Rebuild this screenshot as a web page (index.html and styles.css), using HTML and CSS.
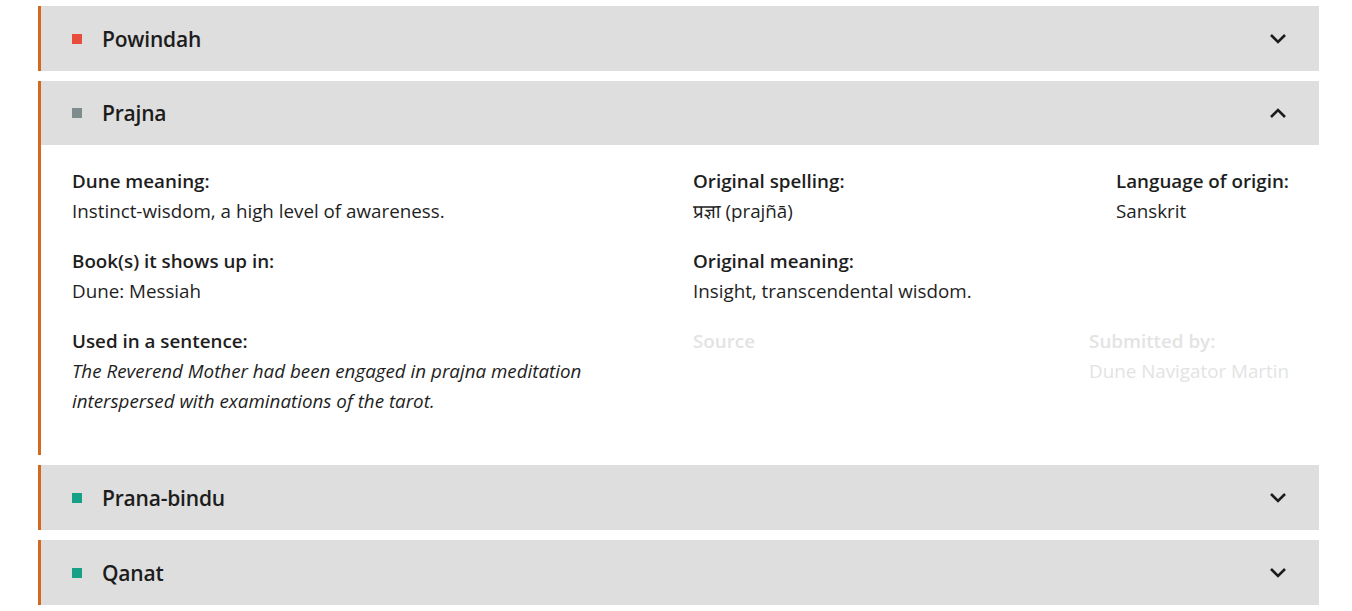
FILE: index.html
```html
<!DOCTYPE html>
<html lang="en">
<head>
<meta charset="utf-8">
<title>Dune glossary</title>
<link rel="stylesheet" href="styles.css">
</head>
<body>
<div class="list">
  <section class="card">
    <header class="card-head">
      <span class="dot dot-red"></span>
      <h2 class="card-title">Powindah</h2>
      <svg class="chev" viewBox="0 0 18 12" width="18" height="12"><path d="M2 2 L9 9 L16 2" fill="none" stroke="#1c1c1c" stroke-width="2.6"/></svg>
    </header>
  </section>
  <section class="card open">
    <header class="card-head">
      <span class="dot dot-gray"></span>
      <h2 class="card-title">Prajna</h2>
      <svg class="chev" viewBox="0 0 18 12" width="18" height="12"><path d="M2 10 L9 3 L16 10" fill="none" stroke="#1c1c1c" stroke-width="2.6"/></svg>
    </header>
    <div class="card-body">
      <div class="field">
        <div class="label">Dune meaning:</div>
        <div class="value">Instinct-wisdom, a high level of awareness.</div>
      </div>
      <div class="field">
        <div class="label">Original spelling:</div>
        <div class="value"><span class="deva">प्रज्ञा</span> (prajñā)</div>
      </div>
      <div class="field right">
        <div class="label">Language of origin:</div>
        <div class="value">Sanskrit</div>
      </div>
      <div class="field">
        <div class="label">Book(s) it shows up in:</div>
        <div class="value">Dune: Messiah</div>
      </div>
      <div class="field">
        <div class="label">Original meaning:</div>
        <div class="value">Insight, transcendental wisdom.</div>
      </div>
      <div class="field right"></div>
      <div class="field">
        <div class="label">Used in a sentence:</div>
        <div class="value sentence">The Reverend Mother had been engaged in prajna meditation interspersed with examinations of the tarot.</div>
      </div>
      <div class="field faded">
        <div class="label">Source</div>
      </div>
      <div class="field right faded">
        <div class="label">Submitted by:</div>
        <div class="value">Dune Navigator Martin</div>
      </div>
    </div>
  </section>
  <section class="card">
    <header class="card-head">
      <span class="dot dot-teal"></span>
      <h2 class="card-title">Prana-bindu</h2>
      <svg class="chev" viewBox="0 0 18 12" width="18" height="12"><path d="M2 2 L9 9 L16 2" fill="none" stroke="#1c1c1c" stroke-width="2.6"/></svg>
    </header>
  </section>
  <section class="card">
    <header class="card-head">
      <span class="dot dot-teal"></span>
      <h2 class="card-title">Qanat</h2>
      <svg class="chev" viewBox="0 0 18 12" width="18" height="12"><path d="M2 2 L9 9 L16 2" fill="none" stroke="#1c1c1c" stroke-width="2.6"/></svg>
    </header>
  </section>
</div>
</body>
</html>
```
FILE: styles.css
```css
html, body {
  margin: 0;
  padding: 0;
  background: #ffffff;
}
body {
  font-family: "Open Sans", "Noto Sans", "Noto Sans Devanagari", sans-serif;
  color: #1e1e1e;
}
.list {
  display: flex;
  flex-direction: column;
  gap: 10px;
  padding: 6px 33px 0 38px;
}
.card {
  border-left: 3px solid #d2691e;
  background: #ffffff;
}
.card-head {
  display: flex;
  align-items: center;
  height: 65px;
  padding: 0 32px 0 31px;
  background: #dedede;
}
.open .card-head {
  height: 64px;
}
.dot {
  width: 10px;
  height: 10px;
  flex: none;
  margin-right: 20px;
}
.dot-red { background: #e74c3c; }
.dot-gray { background: #7f8c8d; }
.dot-teal { background: #16a085; }
.card-title {
  margin: 0;
  flex: 1;
  font-size: 21px;
  font-weight: 600;
  color: #1c1c1c;
  letter-spacing: -0.2px;
}
.chev {
  flex: none;
  display: block;
}
.card-body {
  display: grid;
  grid-template-columns: 621px 1fr auto;
  row-gap: 20px;
  padding: 21px 30px 39px 31px;
}
.field {
  font-size: 18.8px;
  line-height: 30px;
}
.label {
  font-weight: 600;
}
.value {
  height: 30px;
}
.value.sentence {
  height: auto;
}
.right {
  justify-self: end;
}
.sentence {
  font-style: italic;
  max-width: 560px;
}
.faded {
  color: #e3e3e3;
}
.deva {
  font-family: "Noto Sans Devanagari", "Lohit Devanagari", "Noto Sans", sans-serif;
  line-height: 1;
}
```
